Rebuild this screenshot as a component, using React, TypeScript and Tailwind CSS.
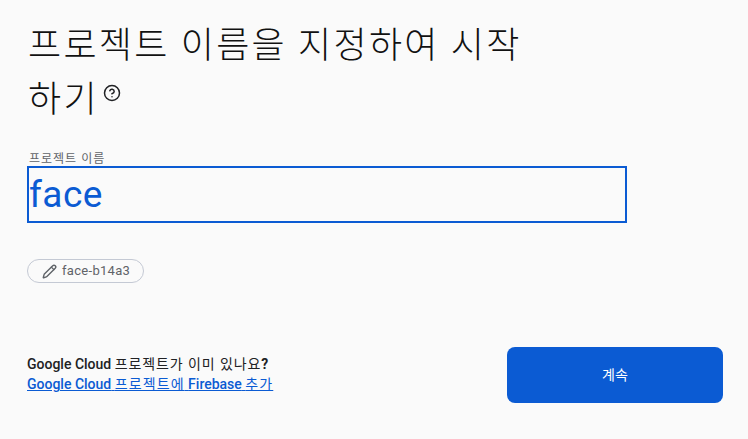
import { CircleHelp, Pencil } from 'lucide-react';

const cjk = "font-['Roboto','Noto_Sans_CJK_KR',sans-serif]";

export default function App() {
  return (
    <div className={`w-[748px] h-[439px] overflow-hidden bg-[#fafafa] pl-[27px] pr-[25px] flex flex-col ${cjk}`}>
      <h1 className="w-[520px] mt-[19px] pl-[1px] text-[36px] leading-[54px] tracking-[2.3px] font-light break-keep text-[#111111]">
        프로젝트 이름을 지정하여 시작 하기
        <CircleHelp className="inline-block ml-[4px] mb-[19px] text-[#202124]" size={18} strokeWidth={2} />
      </h1>
      <label className="mt-[25px] pl-[2px] text-[12px] leading-[14px] tracking-[1px] text-[#5f6368]">프로젝트 이름</label>
      <div className="w-[600px] h-[57px] border-2 border-[#0b5bd3] flex items-center">
        <span className="text-[37px] leading-[52px] tracking-[0.5px] text-[#0b5bd3]">face</span>
      </div>
      <div className="mt-[36px] self-start h-[24px] w-[117px] rounded-full border border-[#c4c9d4] flex items-center pl-[14px] gap-[5px] text-[13px] tracking-[0.3px] text-[#5f6368]">
        <Pencil size={15} strokeWidth={2.2} />
        <span>face-b14a3</span>
      </div>
      <div className="mt-[64px] flex items-start justify-between">
        <div className="mt-[7px] text-[14px] leading-[20px]">
          <p className="text-[#202124]">
            <span className="font-medium">Google Cloud</span>{' '}
            <span className="tracking-[0.9px]">프로젝트가 이미 있나요</span>
            <span className="font-bold">?</span>
          </p>
          <a className="text-[#0b5bd3] underline">
            <span className="font-medium">Google Cloud</span>{' '}
            <span className="tracking-[1.1px]">프로젝트에</span>{' '}
            <span className="font-medium">Firebase</span>{' '}
            <span className="tracking-[1.1px]">추가</span>
          </a>
        </div>
        <button className="w-[216px] h-[56px] rounded-[8px] bg-[#0b5bd3] text-white text-[14px]">계속</button>
      </div>
    </div>
  );
}
